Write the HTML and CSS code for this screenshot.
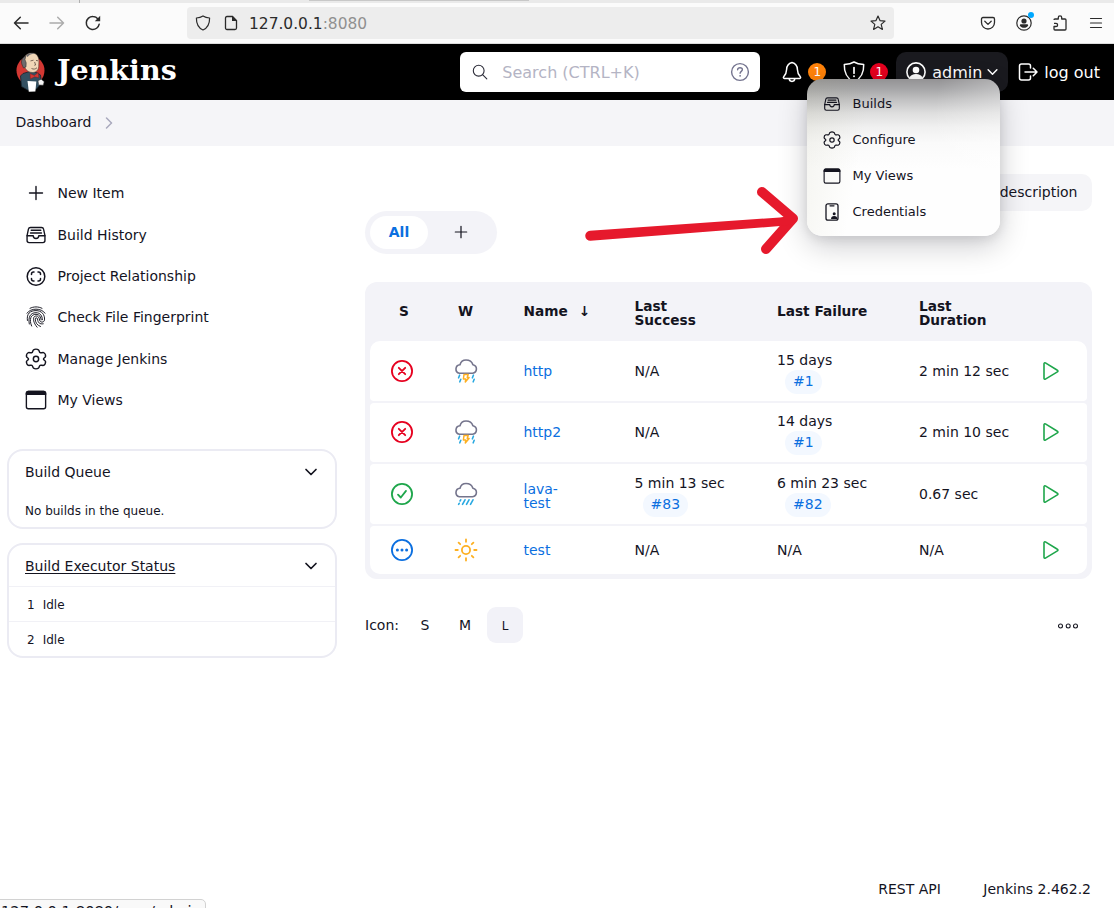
FILE: index.html
```html
<!DOCTYPE html>
<html lang="en">
<head>
<meta charset="utf-8">
<title>Dashboard [Jenkins]</title>
<link rel="stylesheet" href="styles.css">
</head>
<body>
<svg class="sprite" aria-hidden="true">
  <symbol id="tray" viewBox="0 0 512 512"><g fill="none" stroke="currentColor" stroke-width="32" stroke-linejoin="round" stroke-linecap="round"><path d="M384 80H128c-26 0-43 14-48 40L48 272v112a48 48 0 0048 48h320a48 48 0 0048-48V272l-32-152c-5-27-23-40-48-40z"/><path d="M48 272h144M320 272h144M192 272a64 64 0 00128 0M144 144h224M128 208h256"/></g></symbol>
  <symbol id="gear" viewBox="0 0 512 512"><g fill="none" stroke="currentColor" stroke-width="34" stroke-linejoin="round"><circle cx="256" cy="256" r="62"/><path d="M430 256c0 24 44 34 48 62 4 30-18 76-46 86-28 9-54-15-80 0-25 14-16 50-40 66-24 14-88 14-112 0-24-16-15-52-40-66-26-15-52 9-80 0-28-10-50-56-46-86 4-28 48-38 48-62s-44-34-48-62c-4-30 18-76 46-86 28-9 54 15 80 0 25-14 16-50 40-66 24-14 88-14 112 0 24 16 15 52 40 66 26 15 52-9 80 0 28 10 50 56 46 86-4 28-48 38-48 62z"/></g></symbol>
  <symbol id="window" viewBox="0 0 512 512"><rect x="32" y="58" width="448" height="402" rx="46" fill="none" stroke="currentColor" stroke-width="32"/><path d="M18 142V100c0-34 24-58 58-58h360c34 0 58 24 58 58v42z" fill="currentColor"/></symbol>
  <symbol id="down" viewBox="0 0 16 16"><path d="M3 5.500l5 5 5-5" fill="none" stroke="currentColor" stroke-width="1.700" stroke-linecap="round" stroke-linejoin="round"/></symbol>
  <symbol id="plus" viewBox="0 0 16 16"><path d="M8 1.500v13M1.500 8h13" fill="none" stroke="currentColor" stroke-width="1.400" stroke-linecap="round"/></symbol>
  <symbol id="failed" viewBox="0 0 24 24"><g fill="none" stroke="#e6001f" stroke-width="1.800" stroke-linecap="round"><circle cx="12" cy="12" r="10.100"/><path d="M8.800 8.800l6.400 6.400M15.200 8.800l-6.400 6.400"/></g></symbol>
  <symbol id="passed" viewBox="0 0 24 24"><g fill="none" stroke="#1ea64b" stroke-width="1.800" stroke-linecap="round" stroke-linejoin="round"><circle cx="12" cy="12" r="10.100"/><path d="M8 12.600l2.800 2.900 5.200-6.600"/></g></symbol>
  <symbol id="notbuilt" viewBox="0 0 24 24"><circle cx="12" cy="12" r="10.100" fill="none" stroke="#0b6fe0" stroke-width="1.800"/><g fill="#0b6fe0"><circle cx="7.400" cy="12" r="1.500"/><circle cx="12" cy="12" r="1.500"/><circle cx="16.600" cy="12" r="1.500"/></g></symbol>
  <symbol id="storm" viewBox="0 0 24 24"><path d="M5.400 14.200h13.200a4.300 4.300 0 00.300-8.500C18 2.800 15.200 1 12 1 9 1 6.800 2.700 6 5.700a4.300 4.300 0 00-.6 8.500z" fill="none" stroke="#74748c" stroke-width="1.600" stroke-linejoin="round"/><path d="M10 15.500h4.200l-1 2.900h1.900L11.300 23l.5-3H9.400z" fill="none" stroke="#fdb022" stroke-width="1.500" stroke-linejoin="round"/><path d="M5.600 16.200l-1 2.600M6.800 20.300l-1 2.500M19.400 16.200l-1 2.600M20.200 20.300l-1 2.500" stroke="#29a9e1" stroke-width="1.600" stroke-linecap="round"/></symbol>
  <symbol id="rain" viewBox="0 0 24 24"><path d="M5.400 14.700h13.200a4.300 4.300 0 00.300-8.500C18 3.300 15.200 1.500 12 1.500 9 1.500 6.800 3.200 6 6.200a4.300 4.300 0 00-.6 8.500z" fill="none" stroke="#74748c" stroke-width="1.600" stroke-linejoin="round"/><path d="M6.700 17.800l-.7 1.200M5.200 21.300l-.6 1.100M11 17.800l-2.500 4.600M15 17.800l-2.500 4.600M19 17.800l-2.500 4.600" stroke="#29a9e1" stroke-width="1.600" stroke-linecap="round"/></symbol>
  <symbol id="sun" viewBox="0 0 24 24"><g fill="none" stroke="#fdb022" stroke-width="1.800" stroke-linecap="round"><circle cx="12" cy="12" r="4.100"/><path d="M12 1.500v2.300M12 20.200v2.300M1.500 12h2.300M20.200 12h2.300M4.600 4.600l1.600 1.600M17.800 17.800l1.600 1.600M4.600 19.400l1.600-1.600M17.800 6.200l1.600-1.600"/></g></symbol>
  <symbol id="play" viewBox="0 0 18 20"><path d="M2 2.700v14.600c0 .8.700 1.200 1.400.8l12-7.200c.7-.4.700-1.300 0-1.700l-12-7.300C2.700 1.500 2 1.900 2 2.700z" fill="none" stroke="#1ea64b" stroke-width="1.600" stroke-linejoin="round"/></symbol>
</svg>

<div class="tabstrip"><span class="tab-sep"></span><span class="tab-edge"></span></div>
<div class="browser">
  <svg class="b-back" viewBox="0 0 16 16"><path d="M15 8H1.500M7.300 2.200L1.500 8l5.800 5.800" fill="none" stroke="currentColor" stroke-width="1.500" stroke-linecap="round" stroke-linejoin="round"/></svg>
  <svg class="b-forward" viewBox="0 0 16 16"><path d="M1 8h13.500M8.700 2.200L14.500 8l-5.800 5.800" fill="none" stroke="currentColor" stroke-width="1.500" stroke-linecap="round" stroke-linejoin="round"/></svg>
  <svg class="b-reload" viewBox="0 0 16 16"><path d="M14.200 9.200A6.500 6.500 0 118 1.500c2 0 3.700.8 5 2.500" fill="none" stroke="currentColor" stroke-width="1.500" stroke-linecap="round"/><path d="M15.200.8v5.400H9.800z" fill="currentColor"/></svg>
  <div class="urlbar">
    <svg class="b-shield" viewBox="0 0 16 16"><path d="M8 .9c2 1.300 4.200 1.900 6.600 2.100.1 5.700-1.700 9.800-6.600 12C3.100 12.800 1.300 8.700 1.400 3 3.800 2.800 6 2.200 8 .9z" fill="none" stroke="currentColor" stroke-width="1.200" stroke-linejoin="round"/></svg>
    <svg class="b-doc" viewBox="0 0 14 16"><path d="M3 1.500h5.500l4 4V13c0 .9-.6 1.500-1.500 1.500H3c-.9 0-1.500-.6-1.500-1.500V3c0-.9.600-1.500 1.500-1.500z" fill="none" stroke="currentColor" stroke-width="1.300"/><path d="M8 1v5h5z" fill="currentColor"/></svg>
    <span class="url">127.0.0.1<span class="port">:8080</span></span>
    <svg class="b-star" viewBox="0 0 16 16"><path d="M8 1l2 4.600 5 .5-3.800 3.300 1.200 5L8 11.800l-4.400 2.600 1.200-5L1 6.100l5-.5z" fill="none" stroke="currentColor" stroke-width="1.200" stroke-linejoin="round"/></svg>
  </div>
  <svg class="b-tool" viewBox="0 0 16 16"><path d="M3 2.500h10c.9 0 1.500.6 1.500 1.500v3.500a6.500 6.500 0 01-13 0V4c0-.9.600-1.500 1.500-1.500zM4.800 6.300L8 9.400l3.200-3.100" fill="none" stroke="currentColor" stroke-width="1.300" stroke-linecap="round" stroke-linejoin="round"/></svg>
  <span class="account"><svg class="b-tool" viewBox="0 0 16 16"><circle cx="8" cy="8" r="7.200" fill="none" stroke="currentColor" stroke-width="1.200"/><circle cx="8" cy="6" r="2.600" fill="currentColor"/><path d="M3.800 10.500c0-.8.600-1.200 1.300-1.200h5.800c.7 0 1.300.4 1.300 1.200-.8 1.500-2.400 2.300-4.200 2.300s-3.400-.8-4.200-2.300z" fill="currentColor"/></svg><i class="dot"></i></span>
  <svg class="b-tool" viewBox="0 0 16 16"><path d="M2 5c0-.6.400-1 1-1h3.300V2.500a1.700 1.700 0 013.400 0V4H13c.6 0 1 .4 1 1v9c0 .6-.4 1-1 1H3c-.6 0-1-.4-1-1v-2.500h2a1.600 1.600 0 000-3.200H2" fill="none" stroke="currentColor" stroke-width="1.300" stroke-linejoin="round"/></svg>
  <svg class="b-menu" viewBox="0 0 14 14"><path d="M1.500 2.500h11M1.500 7h11M1.500 11.500h11" stroke="currentColor" stroke-width="1.200" stroke-linecap="round"/></svg>
</div>

<header class="header">
  <svg class="butler" viewBox="0 0 29 40">
    <ellipse cx="14.500" cy="18.500" rx="14" ry="14.500" fill="#d33833"/>
    <path d="M7 21.500L4.500 24l1 10.500 6 3.500 9-1 5-6-1-8-3-2-6-2z" fill="#335061" stroke="#16232c" stroke-width=".8"/>
    <path d="M7.500 7.500C8.500 3 12 .8 16 .9c4.800.1 7.200 4 6.900 9.100l-.2 4.500c-.2 4-2.900 6-6.300 6-3.200 0-6.200-2-7.700-5z" fill="#f0d6b7" stroke="#3b2f28" stroke-width=".5"/>
    <path d="M9.800 4C6 5.500 4.700 9 6 12.500L7.500 16l2.500-1 .2-4.200-1.200-3.100z" fill="#6d6b6d" stroke="#222" stroke-width=".5"/>
    <path d="M10 3.500C13 .5 17 .6 20 2c-3-.6-6-.1-8.500 3z" fill="#6d6b6d"/>
    <path d="M14.500 8.900l3-.7M20 8.400l2 .4M18.600 10l1 3-1.300.3M15.500 16.500c2 1 4.200.7 5.500-.8" fill="none" stroke="#49372f" stroke-width=".7"/>
    <path d="M14 21.500l4.300 2 4-3 .5 5.300-4-1-4.500 2.200z" fill="#d33833" stroke="#731d19" stroke-width=".4"/>
    <path d="M11.500 29l8.800.4-.9 10.100-6.600.2z" fill="#fff"/>
    <path d="M22 28.700l3.200-1.500 3 2.500-1 3.500-4.500-.3z" fill="#f4f4f4" stroke="#333" stroke-width=".5"/>
  </svg>
  <span class="wordmark">Jenkins</span>
  <div class="search">
    <svg class="search-icon" viewBox="0 0 16 16"><circle cx="6.700" cy="6.700" r="5.400" fill="none" stroke="currentColor" stroke-width="1.100"/><path d="M10.800 10.800l4 4" stroke="currentColor" stroke-width="1.100" stroke-linecap="round"/></svg>
    <span class="placeholder">Search (CTRL+K)</span>
    <svg class="help" viewBox="0 0 20 20"><circle cx="10" cy="10" r="8.400" fill="none" stroke="currentColor" stroke-width="1.400"/><path d="M7.600 7.700c.1-1.300 1.100-2 2.400-2s2.400.7 2.400 1.900c0 1.800-2.300 1.700-2.300 3.700" fill="none" stroke="currentColor" stroke-width="1.400" stroke-linecap="round"/><circle cx="10.100" cy="13.800" r=".9" fill="currentColor"/></svg>
  </div>
  <div class="notice bell">
    <svg viewBox="0 0 20 22"><path d="M10 1.500c-3.700.9-5.300 3.500-5.400 7-.1 4-1.200 5.500-2.900 7.300-.6.700-.3 1.600.6 1.600h15.400c.9 0 1.200-.9.600-1.600-1.700-1.800-2.800-3.300-2.900-7.300-.1-3.500-1.700-6.100-5.400-7zM7.200 17.600a2.800 2.800 0 005.600 0" fill="none" stroke="currentColor" stroke-width="1.500" stroke-linejoin="round"/></svg>
    <span class="badge orange">1</span>
  </div>
  <div class="notice security">
    <svg viewBox="0 0 22 22"><path d="M11 1C8.500 2.500 5 3.300 1.300 3.600 1 11.300 3.200 17.200 11 21c7.800-3.800 10-9.700 9.700-17.400C17 3.300 13.500 2.500 11 1z" fill="none" stroke="currentColor" stroke-width="1.500" stroke-linejoin="round"/><path d="M11 6.500v5.700" stroke="currentColor" stroke-width="1.700" stroke-linecap="round"/><circle cx="11" cy="15.200" r="1" fill="currentColor"/></svg>
    <span class="badge red">1</span>
  </div>
  <div class="user">
    <svg class="avatar" viewBox="0 0 20 20"><circle cx="10" cy="10" r="9.100" fill="none" stroke="currentColor" stroke-width="1.600"/><circle cx="10" cy="8" r="3.300" fill="currentColor"/><path d="M3.500 15.500c1-2.300 3.400-3.500 6.500-3.500s5.500 1.200 6.500 3.500C15 17.800 12.700 19 10 19s-5-1.200-6.500-3.500z" fill="currentColor"/></svg>
    <span class="label16">admin</span>
    <svg class="chev"><use href="#down"/></svg>
  </div>
  <div class="logout">
    <svg viewBox="0 0 20 18"><path d="M12.500 5V3c0-1.200-.8-2-2-2h-7c-1.200 0-2 .8-2 2v12c0 1.200.8 2 2 2h7c1.200 0 2-.8 2-2v-2M7 9h12M15.300 5.200L19 9l-3.700 3.800" fill="none" stroke="currentColor" stroke-width="1.500" stroke-linecap="round" stroke-linejoin="round"/></svg>
    <span class="label16">log out</span>
  </div>
</header>

<nav class="crumbs"><span>Dashboard</span><svg viewBox="0 0 8 12"><path d="M1.500 1L6.500 6l-5 5" fill="none" stroke="currentColor" stroke-width="1.500" stroke-linecap="round" stroke-linejoin="round"/></svg></nav>

<div class="page">
  <aside class="side">
    <ul class="tasks">
      <li><svg class="small"><use href="#plus"/></svg>New Item</li>
      <li><svg><use href="#tray"/></svg>Build History</li>
      <li><svg viewBox="0 0 22 22"><g fill="none" stroke="currentColor" stroke-width="1.500" stroke-linecap="round"><circle cx="11" cy="11.500" r="8.800"/><path d="M6.500 9.500V9a2 2 0 012-2H9M13 7h.5a2 2 0 012 2v.5M15.500 13.500v.5a2 2 0 01-2 2H13M9 16h-.5a2 2 0 01-2-2v-.5"/></g></svg>Project Relationship</li>
      <li><svg viewBox="0 0 22 22"><g fill="none" stroke="currentColor" stroke-width=".95" stroke-linecap="round"><path d="M5 2.300C8.500.4 13.500.4 17 2.300M2 7.200C5.500 1.700 16.500 1.700 20 7.200M2.400 14.500C1.400 7.500 5.200 4.600 11 4.600c5.600 0 9 4 8.500 9.300-.3 2.900-4.500 2.900-4.900.1-.4-2.500-1.300-4-3.400-4-3.700 0-3.900 5.500.9 11.200M4.300 18C3 11.500 5 6.700 11 6.700c4.300 0 6.300 3.200 6.400 7M6.600 20C3.700 13.200 6 8.300 11 8.300c3.500 0 4.900 2.800 5.200 5.500M15.500 20.500c-3.500-1.200-5.200-4.200-5.300-7.500 0-1.500 2-1.700 2.300 0 .4 3.700 2.200 5.500 5.700 4.800"/></g></svg>Check File Fingerprint</li>
      <li><svg><use href="#gear"/></svg>Manage Jenkins</li>
      <li><svg><use href="#window"/></svg>My Views</li>
    </ul>
    <section class="pane queue">
      <div class="pane-head"><span>Build Queue</span><svg><use href="#down"/></svg></div>
      <p>No builds in the queue.</p>
    </section>
    <section class="pane executors">
      <div class="pane-head"><span class="under">Build Executor Status</span><svg><use href="#down"/></svg></div>
      <div class="executor"><span>1</span>Idle</div>
      <div class="executor"><span>2</span>Idle</div>
    </section>
  </aside>

  <main class="main">
    <div class="describe"><span class="btn"><svg viewBox="0 0 16 16"><path d="M2 14l.8-3.500L11.500 2 14 4.500l-8.500 8.700z" fill="none" stroke="currentColor" stroke-width="1.300"/></svg>Add description</span></div>
    <div class="tabs"><span class="tab on">All</span><span class="tab"><svg><use href="#plus"/></svg></span></div>
    <div class="jobs">
      <div class="row head"><span class="s">S</span><span class="w">W</span><span class="name">Name<b class="sort">↓</b></span><span class="two">Last<br>Success</span><span>Last Failure</span><span class="two">Last<br>Duration</span></div>
      <div class="row"><svg><use href="#failed"/></svg><svg><use href="#storm"/></svg><a class="name">http</a><span>N/A</span><span class="stack">15 days<br><a class="build">#1</a></span><span>2 min 12 sec</span><svg class="run"><use href="#play"/></svg></div>
      <div class="row"><svg><use href="#failed"/></svg><svg><use href="#storm"/></svg><a class="name">http2</a><span>N/A</span><span class="stack">14 days<br><a class="build">#1</a></span><span>2 min 10 sec</span><svg class="run"><use href="#play"/></svg></div>
      <div class="row"><svg><use href="#passed"/></svg><svg><use href="#rain"/></svg><a class="name two">lava-<br>test</a><span class="stack">5 min 13 sec<br><a class="build">#83</a></span><span class="stack">6 min 23 sec<br><a class="build">#82</a></span><span>0.67 sec</span><svg class="run"><use href="#play"/></svg></div>
      <div class="row short"><svg><use href="#notbuilt"/></svg><svg><use href="#sun"/></svg><a class="name">test</a><span>N/A</span><span>N/A</span><span>N/A</span><svg class="run"><use href="#play"/></svg></div>
    </div>
    <div class="sizes"><span class="label">Icon:</span><span class="size">S</span><span class="size">M</span><span class="size on">L</span>
      <svg class="more" viewBox="0 0 22 8"><g fill="none" stroke="currentColor" stroke-width="1.050"><circle cx="3.500" cy="4" r="2"/><circle cx="11.200" cy="4" r="2"/><circle cx="18.500" cy="4" r="2"/></g></svg>
    </div>
  </main>
</div>

<footer class="footer"><span>REST API</span><span>Jenkins 2.462.2</span></footer>

<div class="menu">
  <div class="item"><svg><use href="#tray"/></svg>Builds</div>
  <div class="item"><svg><use href="#gear"/></svg>Configure</div>
  <div class="item"><svg><use href="#window"/></svg>My Views</div>
  <div class="item"><svg viewBox="0 0 18 18"><rect x="3" y=".8" width="12" height="16.400" rx="2" fill="none" stroke="currentColor" stroke-width="1.300"/><path d="M7 2.800h4" stroke="currentColor" stroke-width="1.200" stroke-linecap="round"/><circle cx="11.200" cy="10.800" r="1.500" fill="currentColor"/><path d="M8 16c0-2 1.200-3 3.200-3s3.200 1 3.200 3z" fill="currentColor"/></svg>Credentials</div>
</div>

<svg class="pointer" viewBox="0 0 220 76">
  <path d="M182 12l31 26.500-27 30.500" fill="none" stroke="#e6192c" stroke-width="10" stroke-linecap="round" stroke-linejoin="round"/>
  <path d="M10 50.800l190-13.300 12-2v9l-12 1.500-189.500 14.800a5 5 0 01-.5-10z" fill="#e6192c"/>
</svg>

<div class="statusbar">127.0.0.1:8080/user/admin</div>
</body>
</html>
```
FILE: styles.css
```css
* { box-sizing: border-box; }
html, body { margin: 0; height: 908px; overflow: hidden; }
body {
  position: relative;
  display: flex;
  flex-direction: column;
  background: #fff;
  color: #14141f;
  font: 14px/14px "DejaVu Sans", sans-serif;
}
svg { display: block; flex: none; }
.sprite { position: absolute; width: 0; height: 0; }

/* Browser chrome */
.tabstrip { display: flex; height: 3px; background: #eaeaea; flex: none; }
.tab-sep { width: 1px; margin-left: 79px; background: #b0b0b0; }
.tab-edge { width: 220px; height: 1px; margin-left: 229px; background: #c8c8c8; }
.browser {
  display: flex;
  align-items: center;
  height: 41px;
  flex: none;
  padding: 0 11px 1px 13px;
  background: #fbfbfb;
  border-bottom: 1px solid #dcdcdc;
  color: #2b2b2b;
}
.b-back, .b-forward, .b-reload { width: 16px; height: 16px; }
.b-forward { margin-left: 20px; color: #acacac; }
.b-reload { margin-left: 20px; }
.urlbar {
  display: flex;
  align-items: center;
  width: 707px;
  height: 32px;
  margin: 0 86px;
  padding: 0 8px;
  border-radius: 4px;
  background: #ededed;
}
.b-shield { width: 16px; height: 16px; }
.b-doc { width: 14px; height: 16px; margin-left: 13px; }
.url { margin-left: 11px; padding-top: 2px; font-size: 15.450px; line-height: 20px; }
.port { color: #909090; }
.b-star { width: 16px; height: 16px; margin-left: auto; }
.b-tool { width: 16px; height: 16px; }
.account { position: relative; margin: 0 20px; }
.dot { position: absolute; left: 12px; top: -3px; width: 6px; height: 6px; border-radius: 50%; background: #00a8ff; }
.b-menu { width: 14px; height: 14px; margin-left: 21px; }

/* Header */
.header {
  display: flex;
  align-items: center;
  height: 56px;
  flex: none;
  padding: 0 14px 0 16px;
  background: #000;
  color: #fff;
  font-size: 16px;
  line-height: 20px;
}
.butler { width: 29px; height: 40px; }
.wordmark { width: 130px; margin: -4px 0 0 12px; font: bold 28.500px/32px "DejaVu Serif", serif; }
.search {
  display: flex;
  align-items: center;
  width: 300px;
  height: 40px;
  margin-left: auto;
  padding: 0 10px 0 12px;
  border-radius: 6px;
  background: #fff;
  color: #2b2b38;
}
.search-icon { width: 16px; height: 16px; }
.placeholder { margin-left: 14px; padding-top: 2px; color: #b4b4c4; }
.label16 { padding-top: 2px; }
.help { width: 20px; height: 20px; margin-left: auto; color: #74748f; }
.notice { display: flex; align-items: center; }
.bell { width: 44px; margin-left: 22px; }
.bell > svg { width: 20px; height: 22px; }
.security { width: 45px; margin-left: 17px; }
.security > svg { width: 22px; height: 22px; }
.badge { width: 18px; height: 18px; margin-left: auto; border-radius: 9px; font-size: 12px; line-height: 19px; text-align: center; }
.orange { background: #fe820a; }
.red { background: #e6001f; }
.user {
  display: flex;
  align-items: center;
  width: 112px;
  height: 40px;
  margin-left: 8px;
  padding-left: 10px;
  border-radius: 10px;
  background: #1a1a1f;
}
.avatar { width: 20px; height: 20px; margin-right: 6px; }
.chev { width: 15px; height: 14px; margin-left: 3px; }
.logout { display: flex; align-items: center; gap: 6px; margin-left: 10px; white-space: nowrap; }
.logout > svg { width: 20px; height: 18px; }

.crumbs {
  display: flex;
  align-items: center;
  gap: 14px;
  height: 46px;
  flex: none;
  padding: 0 0 2px 15.500px;
  background: #f5f5f8;
}
.crumbs > svg { width: 8px; height: 12px; margin-top: 2px; color: #a9a9bd; }

/* Page */
.page { display: flex; height: 724px; flex: none; }
.side { width: 330px; margin: 26px 28px 0 7px; flex: none; }
.tasks { margin: 0; padding: 0; list-style: none; }
.tasks > li { display: flex; align-items: center; gap: 10.500px; height: 41.500px; padding-left: 18px; }
.tasks > li:nth-child(2) { padding-top: 1px; }
.tasks svg { width: 22px; height: 22px; }
.tasks svg.small { width: 16px; height: 16px; margin: 0 3px; }
.pane { border: 2px solid #ebebf3; border-radius: 16px; }
.pane-head { display: flex; align-items: center; justify-content: space-between; height: 42px; padding: 0 16px; }
.pane-head > svg { width: 16px; height: 16px; }
.queue { height: 80px; margin-top: 28px; }
.queue > p { margin: 10px 16px; font-size: 12px; line-height: 16px; }
.executors { height: 115px; margin-top: 14px; }
.executors .pane-head { height: 41px; }
.under { text-decoration: underline; text-underline-offset: 2px; }
.executor { display: flex; align-items: center; gap: 8px; height: 35px; padding: 2px 0 0 18px; border-top: 1px solid #f1f1f6; font-size: 12px; }

.main { width: 727px; padding-top: 28px; }
.describe { display: flex; justify-content: flex-end; height: 37px; }
.btn { display: flex; align-items: center; gap: 9px; padding: 0 14.500px 2px; border-radius: 10px; background: #f5f5f8; }
.btn > svg { width: 16px; height: 16px; }
.tabs { display: flex; gap: 4px; width: 132px; height: 43px; padding: 5px; border-radius: 22px; background: #f3f3f8; }
.tab { display: flex; align-items: center; justify-content: center; width: 58px; height: 33px; padding-bottom: 2px; border-radius: 17px; }
.tab > svg { width: 14px; height: 14px; }
.tab.on { background: #fff; color: #0b6fe0; font-weight: bold; }

.jobs {
  display: flex;
  flex-direction: column;
  gap: 2px;
  height: 297px;
  margin-top: 28px;
  padding: 0 5px 5px;
  border-radius: 12px;
  background: #f3f3f8;
}
.row {
  display: grid;
  grid-template-columns: 64px 64px 136.500px 142.500px 142px 95px 73px;
  align-items: center;
  height: 59.700px;
  border-radius: 4px;
  background: #fff;
}
.row.head { height: 57px; padding-top: 2px; background: none; font-size: 13.700px; font-weight: bold; }
.head .s { padding-left: 29px; }
.head .w { padding-left: 24px; }
.two { padding-top: 3px; }
.stack { padding-top: 5px; }
.sort { margin-left: 11px; }
.head + .row { border-radius: 10px 10px 4px 4px; }
.row.short { height: 48px; border-radius: 4px 4px 10px 10px; }
.row > svg { width: 24px; height: 24px; justify-self: center; }
.row > svg.run { width: 18px; height: 20px; }
.name { padding-left: 25.500px; }
.row a { color: #0b6fe0; }
.build { display: inline-block; height: 24px; margin: 3px 0 0 8px; padding: 0 8px; border-radius: 12px; background: #f3f8ff; line-height: 23px; }

.sizes { display: flex; align-items: center; height: 36px; margin-top: 28px; }
.label { width: 42px; }
.size { width: 36px; margin-right: 4px; text-align: center; }
.size.on { height: 36px; border-radius: 9px; background: #f2f2f8; font-size: 12px; line-height: 38px; }
.more { width: 22px; height: 8px; margin: 1px 13px 0 auto; }

.footer { display: flex; justify-content: flex-end; gap: 42.500px; height: 38px; padding: 12px 23px 0; }

/* Overlays */
.menu {
  position: absolute;
  left: 807px;
  top: 79px;
  width: 193px;
  height: 157px;
  padding-top: 7px;
  border-radius: 15px;
  background:
    linear-gradient(100deg, rgba(170, 170, 130, .12), transparent 30%, transparent 60%, rgba(255, 255, 255, .4)),
    linear-gradient(#939294, #a6a6a8 10px, #c4c4c5 22px, #dedede 34px, #f0f0f0 48px, #fafafa 64px, #fefefe 90px);
  box-shadow: 0 10px 30px rgba(0, 0, 20, .2), 0 2px 12px rgba(0, 0, 20, .1);
  font-size: 13px;
}
.item { display: flex; align-items: center; gap: 11.500px; height: 36px; padding-left: 16px; }
.item > svg { width: 18px; height: 18px; }
.pointer { position: absolute; left: 580px; top: 180px; width: 220px; height: 76px; }
.statusbar {
  position: absolute;
  left: -1px;
  top: 899px;
  width: 207px;
  height: 24px;
  padding-left: 1px;
  border: 1px solid #d2d2d2;
  border-radius: 0 5px 0 0;
  background: #f9f9f9;
  font-size: 14.670px;
  line-height: 22px;
}
```
